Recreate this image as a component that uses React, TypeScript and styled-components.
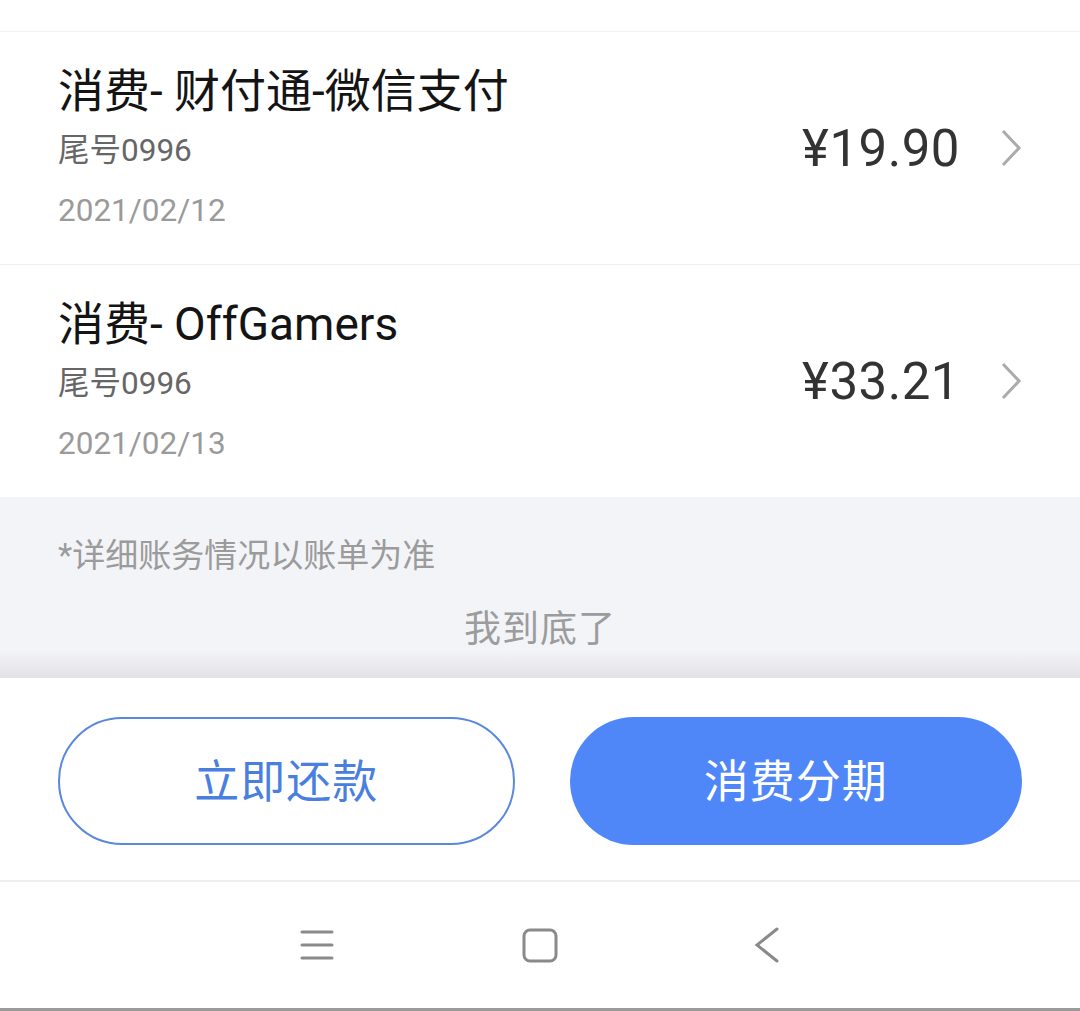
import React from "react";
import styled, { createGlobalStyle } from "styled-components";

const GlobalStyle = createGlobalStyle`
  * { box-sizing: border-box; }
  html, body { margin: 0; padding: 0; background: #ffffff; }
  body {
    font-family: Roboto, "Noto Sans CJK SC", "Noto Sans", sans-serif;
    -webkit-font-smoothing: antialiased;
  }
`;

const Page = styled.div`
  width: 1080px;
  height: 1011px;
  display: flex;
  flex-direction: column;
  background: #ffffff;
  overflow: hidden;
`;

const TopStrip = styled.div`
  height: 32px;
  flex: none;
  border-bottom: 1px solid #f1f1f3;
`;

const Row = styled.div<{ $last?: boolean }>`
  height: ${(p) => (p.$last ? 232 : 233)}px;
  flex: none;
  display: flex;
  align-items: center;
  padding: 0 58px;
  border-bottom: ${(p) => (p.$last ? "none" : "1px solid #f0f0f2")};
`;

const Info = styled.div`
  flex: 1;
  display: flex;
  flex-direction: column;
  padding-top: 6px;
`;

const Title = styled.div`
  font-size: 46px;
  line-height: 58px;
  color: #141414;
  white-space: nowrap;
`;

const Card = styled.div`
  font-size: 31.5px;
  line-height: 62px;
  color: #666666;
`;

const DateText = styled.div`
  font-size: 31.5px;
  line-height: 58px;
  color: #9a9a9a;
`;

const Amount = styled.div`
  font-size: 51px;
  color: #333333;
  margin-right: 40px;
  letter-spacing: 0.5px;
`;

const Chevron = styled.svg`
  width: 22px;
  height: 40px;
  flex: none;
`;

const Footer = styled.div`
  height: 181px;
  flex: none;
  background: linear-gradient(
    to bottom,
    #f3f4f8 0%,
    #f3f4f8 84%,
    #ebebef 93%,
    #e2e2e6 100%
  );
  display: flex;
  flex-direction: column;
`;

const Note = styled.div`
  padding: 40px 58px 0;
  font-size: 33px;
  line-height: 38px;
  color: #9b9b9b;
`;

const EndText = styled.div`
  margin-top: 33px;
  text-align: center;
  font-size: 37px;
  line-height: 44px;
  color: #9c9c9c;
  letter-spacing: 1px;
`;

const ActionBar = styled.div`
  height: 202px;
  flex: none;
  display: flex;
  align-items: center;
  gap: 55px;
  padding: 4px 58px 0;
`;

const PillButton = styled.button<{ $primary?: boolean }>`
  flex: 1;
  height: 128px;
  border-radius: 64px;
  padding: 0 0 6px;
  font-family: "Noto Sans CJK SC", sans-serif;
  font-size: 45px;
  letter-spacing: 1px;
  cursor: pointer;
  border: ${(p) => (p.$primary ? "none" : "2.5px solid #5a88dc")};
  background: ${(p) => (p.$primary ? "#5087f8" : "#ffffff")};
  color: ${(p) => (p.$primary ? "#ffffff" : "#4a7fdf")};
`;

const NavBar = styled.div`
  height: 131px;
  flex: none;
  border-top: 2px solid #eeeeee;
  border-bottom: 3px solid #9a9a9a;
  display: flex;
  align-items: center;
  justify-content: center;
  gap: 187px;
`;

const NavIcon = styled.svg`
  width: 36px;
  height: 36px;
  flex: none;
`;

const ChevronRight = () => (
  <Chevron viewBox="0 0 22 40">
    <polyline
      points="3,3 19,20 3,37"
      fill="none"
      stroke="#ababab"
      strokeWidth="3"
      strokeLinejoin="miter"
    />
  </Chevron>
);

type Tx = { title: string; card: string; date: string; amount: string };

const txs: Tx[] = [
  { title: "消费- 财付通-微信支付", card: "尾号0996", date: "2021/02/12", amount: "¥19.90" },
  { title: "消费- OffGamers", card: "尾号0996", date: "2021/02/13", amount: "¥33.21" },
];

export default function App() {
  return (
    <Page>
      <GlobalStyle />
      <TopStrip />
      {txs.map((t, i) => (
        <Row key={i} $last={i === txs.length - 1}>
          <Info>
            <Title>{t.title}</Title>
            <Card>{t.card}</Card>
            <DateText>{t.date}</DateText>
          </Info>
          <Amount>{t.amount}</Amount>
          <ChevronRight />
        </Row>
      ))}
      <Footer>
        <Note>*详细账务情况以账单为准</Note>
        <EndText>我到底了</EndText>
      </Footer>
      <ActionBar>
        <PillButton>立即还款</PillButton>
        <PillButton $primary>消费分期</PillButton>
      </ActionBar>
      <NavBar>
        <NavIcon viewBox="0 0 36 36">
          <g stroke="#8a8a8a" strokeWidth="3" strokeLinecap="round">
            <line x1="3" y1="5" x2="33" y2="5" />
            <line x1="3" y1="18" x2="33" y2="18" />
            <line x1="3" y1="31" x2="33" y2="31" />
          </g>
        </NavIcon>
        <NavIcon viewBox="0 0 36 36">
          <rect x="2" y="3" width="32" height="31" rx="6" fill="none" stroke="#8a8a8a" strokeWidth="3" />
        </NavIcon>
        <NavIcon viewBox="0 0 36 36">
          <polyline points="32,2 12,18 32,34" fill="none" stroke="#8a8a8a" strokeWidth="3" strokeLinecap="round" />
        </NavIcon>
      </NavBar>
    </Page>
  );
}
